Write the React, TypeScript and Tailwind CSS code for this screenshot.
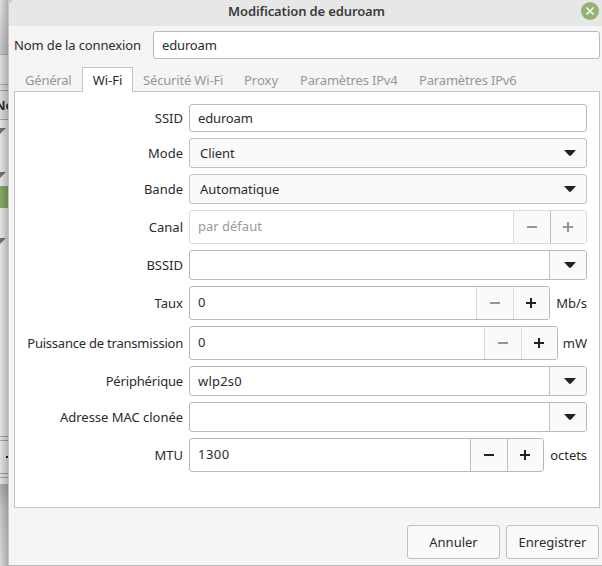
import type { ReactNode } from "react";
import clsx from "clsx";

function Caret() {
  return (
    <svg className="h-[6px] w-[12px] shrink-0" viewBox="0 0 12 6">
      <path d="M0 0H12L7 5.4Q6 6.2 5 5.4Z" fill="#222" />
    </svg>
  );
}

function Sign({ plus, off }: { plus?: boolean; off?: boolean }) {
  return (
    <svg className="h-[10px] w-[10px] shrink-0" viewBox="0 0 10 10" shapeRendering="crispEdges">
      <path d={plus ? "M0 4H10V6H0ZM4 0H6V10H4Z" : "M0 4H10V6H0Z"} fill={off ? "#959595" : "#222"} />
    </svg>
  );
}

function Row({ label, tracking, height, children }: { label: string; tracking?: string; height: string; children: ReactNode }) {
  return (
    <div className={clsx("flex gap-[6px]", height)}>
      <div className={clsx("flex w-[168px] items-center justify-end whitespace-nowrap", tracking)}>{label}</div>
      <div className="flex w-[398px] items-center">{children}</div>
    </div>
  );
}

function Select({ children }: { children: string }) {
  return (
    <div className="flex h-full w-full items-center justify-between rounded-[3px] border border-[#c1c1c1] bg-[#fafafa] pr-[10px] pl-[10px]">
      <span className="tracking-[-0.05px]">{children}</span>
      <Caret />
    </div>
  );
}

function ComboEntry({ value }: { value?: string }) {
  return (
    <div className="flex h-full w-full rounded-[3px] border border-[#b9b9b9] bg-white">
      <div className="flex flex-1 items-center pl-2 tracking-[0.2px]">{value}</div>
      <div className="flex w-[37px] items-center justify-center rounded-r-[2px] border-l border-[#c1c1c1] bg-[#fafafa] pl-[4px]">
        <Caret />
      </div>
    </div>
  );
}

function Spin({ value, width, unit, off, minusOff }: { value: string; width: string; unit?: string; off?: boolean; minusOff?: boolean }) {
  return (
    <>
      <div className={clsx("flex h-full shrink-0 rounded-[3px] border bg-white", width, off ? "border-[#dcdcdc] text-[#9a9a9a]" : "border-[#b9b9b9] tracking-[0.5px]")}>
        <div className="flex flex-1 items-center pb-[2px] pl-2">{value}</div>
        <div className={clsx("flex w-[37px] items-center justify-center border-l bg-[#fafafa]", minusOff ? "border-[#dcdcdc]" : "border-[#bdbdbd]")}>
          <Sign off={minusOff} />
        </div>
        <div className={clsx("flex w-[36px] items-center justify-center rounded-r-[2px] border-l bg-[#fafafa] pr-[1px]", minusOff && !off ? "border-[#dcdcdc]" : "border-[#bdbdbd]")}>
          <Sign plus off={off} />
        </div>
      </div>
      {unit && <span className="flex-1 text-right tracking-[-0.05px] whitespace-nowrap">{unit}</span>}
    </>
  );
}

const tabs = [
  { name: "Général", box: "w-[68px] pl-[11px] tracking-[-0.2px]" },
  { name: "Wi-Fi", box: "w-[51px]", active: true },
  { name: "Sécurité Wi-Fi", box: "w-[101px] pl-[10px] tracking-[-0.17px]" },
  { name: "Proxy", box: "w-[56px] pl-[10px]" },
  { name: "Paramètres IPv4", box: "w-[119px] pl-[10px] tracking-[-0.17px]" },
  { name: "Paramètres IPv6", box: "w-[119px] pl-[10px] tracking-[-0.17px]" },
];

function WindowBehind() {
  return (
    <div className="relative h-[566px] w-2 shrink-0 overflow-hidden bg-[#dedede] text-[#333]">
      <div className="h-[54px] bg-linear-to-b from-[#ececec] to-[#cecece]" />
      <div className="h-[31px] border-y border-[#b4b4b4] bg-[#e8e8e8]" />
      <div className="h-[5px] bg-[#e4e4e4]" />
      <div className="h-[30px] border-y border-[#aaa] bg-[#e6e6e6] pt-[6px] text-[13px] leading-[17px] font-bold">
        <span className="-ml-[5px]">No</span>
      </div>
      <div className="h-[66px] bg-[#f0f0f0]">
        <svg className="h-[66px] w-2" viewBox="0 0 8 66">
          <path d="M0 8H6L0 14ZM0 52H6L0 58Z" fill="#777" />
        </svg>
      </div>
      <div className="h-[22px] bg-[#8fb06d]" />
      <div className="h-[228px] bg-[#f0f0f0]">
        <svg className="h-[40px] w-2" viewBox="0 0 8 40">
          <path d="M0 30H6L0 36Z" fill="#777" />
        </svg>
      </div>
      <div className="h-[5px] border-y border-[#aaa] bg-[#eee]" />
      <div className="h-[32px] bg-[#eee] pt-[15px] pl-[6px]">
        <div className="h-[2px] w-[2px] bg-[#222]" />
      </div>
      <div className="h-[5px] border-y border-[#aaa] bg-[#eee]" />
      <div className="h-[6px] bg-[#eee]" />
      <div className="h-[82px] bg-linear-to-b from-[#b4b4b4] via-[#d0d0d0] via-30% to-[#e6e6e6]" />
      <div className="absolute inset-0 bg-linear-to-r from-black/5 to-black/25" />
    </div>
  );
}

export default function App() {
  return (
    <div className="flex h-[566px] w-[602px] overflow-hidden bg-[#cacaca] font-['Noto_Sans','Open_Sans',sans-serif] text-[13px] leading-[18px] text-[#2b2b2b]">
      <WindowBehind />
      <div className="flex h-[566px] w-[594px] flex-col rounded-tl-[7px] border-b border-l border-b-[#bcbcbc] border-l-[#c6c6c6] bg-[#f5f5f5]">
        <div className="flex h-[26px] shrink-0 items-center rounded-tl-[6px] bg-[#e7e7e7] pr-[3px] pb-[4px]">
          <div className="w-[23px]" />
          <h1 className="flex-1 text-center font-semibold tracking-[-0.13px] text-[#3c3c3c]">Modification de eduroam</h1>
          <svg className="h-[18px] w-[18px]" viewBox="0 0 18 18">
            <circle cx="9" cy="9" r="9" fill="#92b372" />
            <path d="M5.5 5.5 12.5 12.5M12.5 5.5 5.5 12.5" stroke="#fff" strokeWidth="1.5" />
          </svg>
        </div>
        <div className="mt-[5px] flex h-7 shrink-0 items-center pl-[5px]">
          <span className="w-[139px] tracking-[-0.13px] whitespace-nowrap">Nom de la connexion</span>
          <div className="flex h-7 w-[447px] items-center rounded-[3px] border border-[#b9b9b9] bg-white pl-2 tracking-[-0.15px]">eduroam</div>
        </div>
        <div className="mt-2 flex h-[25px] shrink-0 pl-[5px]">
          {tabs.map((t) => (
            <div
              key={t.name}
              className={clsx(
                "flex shrink-0 items-center whitespace-nowrap",
                t.box,
                t.active ? "z-10 justify-center border border-b-0 border-[#c4c4c4] bg-white" : "h-[25px] text-[#979797]",
              )}
            >
              {t.name}
            </div>
          ))}
        </div>
        <div className="-mt-px ml-[5px] flex h-[417px] w-[586px] shrink-0 flex-col gap-[6px] border border-[#c4c4c4] bg-white pt-3">
          <Row label="SSID" height="h-7">
            <div className="flex h-full w-full items-center rounded-[3px] border border-[#b9b9b9] pl-2 tracking-[-0.15px]">eduroam</div>
          </Row>
          <Row label="Mode" height="h-[30px]"><Select>Client</Select></Row>
          <Row label="Bande" height="h-[30px]"><Select>Automatique</Select></Row>
          <Row label="Canal" height="h-[34px]"><Spin value="par défaut" width="w-[398px]" off minusOff /></Row>
          <Row label="BSSID" height="h-[30px]"><ComboEntry /></Row>
          <Row label="Taux" height="h-[34px]"><Spin value="0" width="w-[361px]" unit="Mb/s" minusOff /></Row>
          <Row label="Puissance de transmission" tracking="tracking-[-0.22px]" height="h-[34px]"><Spin value="0" width="w-[369px]" unit="mW" minusOff /></Row>
          <Row label="Périphérique" tracking="tracking-[-0.17px]" height="h-[30px]"><ComboEntry value="wlp2s0" /></Row>
          <Row label="Adresse MAC clonée" tracking="tracking-[-0.03px]" height="h-[30px]"><ComboEntry /></Row>
          <Row label="MTU" height="h-[34px]"><Spin value="1300" width="w-[355px]" unit="octets" /></Row>
        </div>
        <div className="mt-[17px] flex justify-end gap-[6px] pr-[3px]">
          {["Annuler", "Enregistrer"].map((name) => (
            <button key={name} className="h-[34px] w-[93px] rounded-[3px] border border-[#c1c1c1] bg-[#fafafa]">{name}</button>
          ))}
        </div>
      </div>
    </div>
  );
}
